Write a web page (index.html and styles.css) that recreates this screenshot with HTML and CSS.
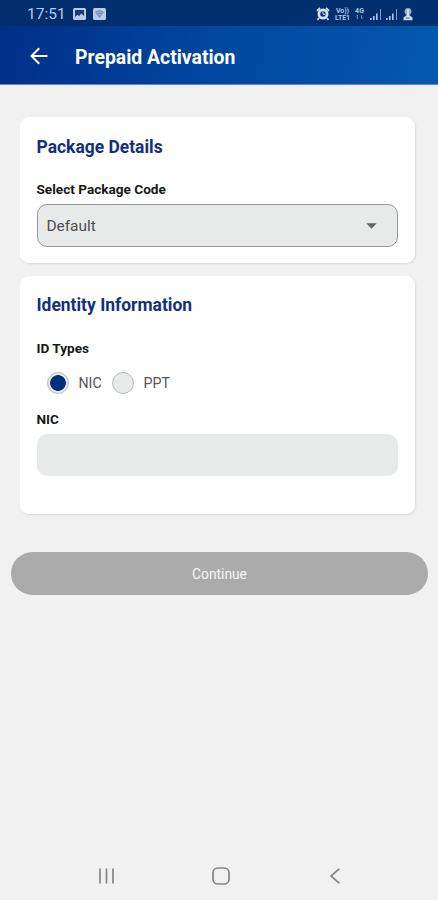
FILE: index.html
```html
<!DOCTYPE html>
<html lang="en">
<head>
<meta charset="utf-8">
<title>Prepaid Activation</title>
<link rel="stylesheet" href="styles.css">
</head>
<body>
<div class="screen">
  <div class="status">
    <span class="clock">17:51</span>
    <svg class="notices" width="36" height="14" viewBox="0 0 36 14">
      <rect x="1" y="1" width="13" height="12" rx="1.5" fill="#b9c9e6"/>
      <path d="M3 3h9v6L9.500 6.500 7 9 5.500 7.800 3 10z" fill="#16397a"/>
      <rect x="21" y="1" width="13" height="12" rx="1.5" fill="#b9c9e6"/>
      <path d="M23 5q4.500-3.500 9 0l-4.500 6z" fill="#738cb9"/>
      <path d="M24.500 6q3-2 6 0M26 8q1.500-1 3 0" fill="none" stroke="#b9c9e6" stroke-width=".7"/>
    </svg>
    <svg class="signals" width="100" height="16" viewBox="0 0 100 16">
      <g fill="none" stroke="#d5e0f3">
        <circle cx="7" cy="8" r="4.100" stroke-width="2.800"/>
        <path d="M7 5.500V8.300h2.200" stroke-width="1"/>
        <path d="M1 4.800L4 2M10 2l3 2.800M3 12l-1.500 1.800M11 12l1.500 1.800" stroke-width="1.800"/>
      </g>
      <g class="network">
        <text x="20" y="7" textLength="13">Vo))</text>
        <text x="19" y="14" textLength="15">LTE1</text>
        <text x="39" y="7" textLength="9">4G</text>
      </g>
      <path d="M41.500 13V9m-1.500 1.500L41.500 9M45.500 9v4m1.500-1.500L45.500 13" fill="none" stroke="#6583b8"/>
      <g fill="#b4c6e4">
        <path d="M54 12h1.600v2H54zM57 10h1.600v4H57zM60 7.500h1.600V14H60zM70 12h1.600v2H70zM73 10h1.600v4H73zM76 7.500h1.600V14H76z"/>
        <path d="M64 3h1v11h-1zM80 3h1v11h-1z" fill="#7d99c9"/>
      </g>
      <circle cx="92" cy="5.500" r="3.500" fill="#91a9c9"/>
      <path d="M90.800 3h2.400v6l3.300 2.500v2.700h-9v-2.700L90.800 9z" fill="#c9dbe8"/>
      <path d="M90 12h3.500" stroke="#436d9d"/>
    </svg>
  </div>
  <header class="appbar">
    <svg width="18" height="18" viewBox="0 0 18 18" fill="none" stroke="#fff" stroke-width="2"><path d="M17.500 9H2M9.200 1.300L1.500 9l7.700 7.700"/></svg>
    <h1>Prepaid Activation</h1>
  </header>
  <main>
    <section class="card package">
      <h2>Package Details</h2>
      <div class="label code-label">Select Package Code</div>
      <div class="field select"><span>Default</span><svg width="11" height="6" viewBox="0 0 11 6"><path d="M.3.300h10.400L5.500 5.700z" fill="#626464"/></svg></div>
    </section>
    <section class="card identity">
      <h2>Identity Information</h2>
      <div class="label types-label">ID Types</div>
      <div class="radios">
        <span class="radio checked"></span><span class="option">NIC</span>
        <span class="radio"></span><span class="option">PPT</span>
      </div>
      <div class="label nic-label">NIC</div>
      <div class="field"></div>
    </section>
    <div class="continue"><span>Continue</span></div>
  </main>
  <nav class="navbar">
    <svg width="18" height="18" viewBox="0 0 18 18"><path d="M2 1.500v15M8.500 1.500v15M15 1.500v15" stroke="#858585" stroke-width="1.700"/></svg>
    <svg class="home" width="20" height="20" viewBox="0 0 20 20"><rect x="2" y="2" width="16" height="16" rx="4.800" fill="none" stroke="#858585" stroke-width="1.700"/></svg>
    <svg width="12" height="18" viewBox="0 0 12 18"><path d="M10.200 1.800L2 9l8.200 7.200" fill="none" stroke="#858585" stroke-width="1.700"/></svg>
  </nav>
</div>
</body>
</html>
```
FILE: styles.css
```css
* { box-sizing: border-box; }
body { margin: 0; font-family: Roboto, sans-serif; background: #f1f1f1; }
h1, h2 { margin: 0; }
svg { display: block; flex: none; }
.screen { width: 438px; height: 900px; display: flex; flex-direction: column; overflow: hidden; }
.status { height: 26px; background: linear-gradient(90deg, #012d6c, #00306f); display: flex; align-items: center; padding: 2px 22px 0 27px; }
.clock { width: 45px; font-size: 15.5px; color: #b9c9e6; white-space: nowrap; }
.signals { margin-left: auto; }
.network { font: 700 7px Roboto, sans-serif; fill: #b4c6e4; }
.appbar { height: 59px; background: linear-gradient(100deg, #002f88, #0147a0 50%, #0359ae); display: flex; align-items: center; padding: 2px 0 0 30px; border-bottom: 1px solid #6b85bd; }
.appbar h1 { margin: 3px 0 0 27px; color: #fff; font-size: 19.4px; font-weight: 700; line-height: 24px; white-space: nowrap; }
main { flex: 1; padding: 32px 10px 0 11px; }
.card { width: 395px; margin-left: 9px; padding: 0 17px 0 16.500px; background: #fff; border-radius: 9px; box-shadow: 1px 1px 2px rgba(0, 0, 0, .1); }
.package { height: 146px; padding-top: 18px; }
.identity { height: 238px; margin-top: 13px; padding-top: 17px; }
h2 { color: #12307b; font-size: 17.45px; font-weight: 700; line-height: 24px; }
.label { color: #181818; font-size: 13.6px; font-weight: 700; line-height: 16px; }
.code-label { margin: 22px 0 7px; }
.field { height: 42px; background: #e8eae9; border-radius: 10px; }
.select { height: 42.5px; display: flex; align-items: center; justify-content: space-between; padding: 1px 20px 0 9px; border: 1px solid #969898; color: #4c4d4d; font-size: 15.4px; }
.types-label { margin-top: 23px; }
.radios { display: flex; align-items: center; height: 22px; margin: 16px 0 0 10px; color: #555; font-size: 14.2px; }
.radio { width: 22px; height: 22px; border: 1px solid #b9bbba; border-radius: 50%; background: #e8eae9; }
.checked { background: radial-gradient(circle, #042f7b 0 7.5px, #e8eae9 8.2px); }
.option { width: 43px; padding-left: 10px; }
.nic-label { margin: 17px 0 7px; }
.continue { height: 43px; margin-top: 38px; border-radius: 22px; background: #ababab; color: #f4f4f4; font-size: 13.8px; display: flex; align-items: center; justify-content: center; }
.navbar { height: 48px; display: flex; align-items: center; justify-content: space-between; padding: 0 97px 0 98px; }
.home { margin-right: 4px; }
```
